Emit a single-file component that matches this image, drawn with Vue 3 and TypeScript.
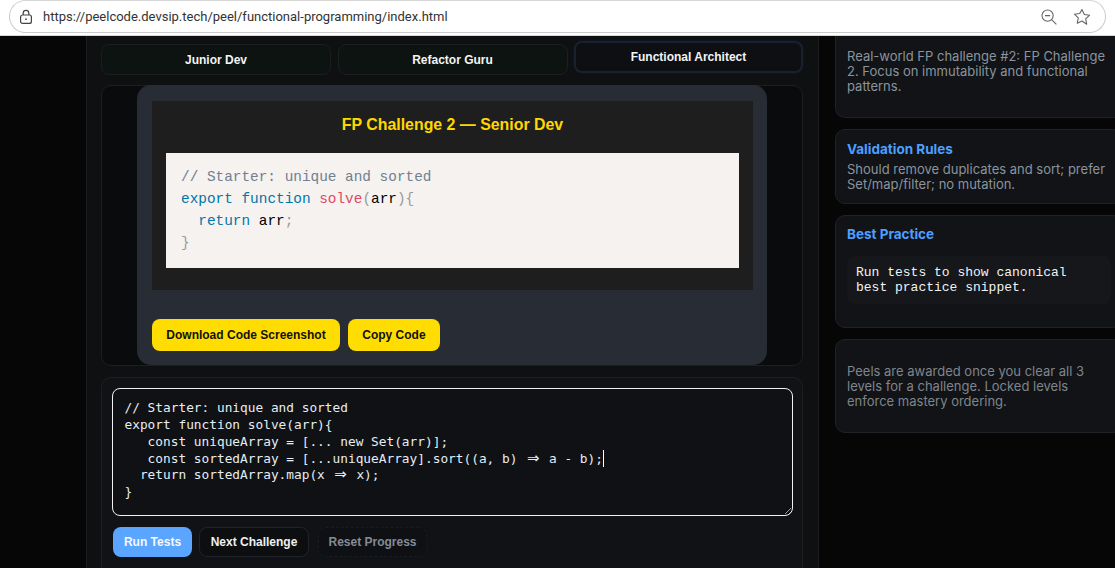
<script setup lang="ts">
const tabs = [
  { label: 'Junior Dev', active: false },
  { label: 'Refactor Guru', active: false },
  { label: 'Functional Architect', active: true },
]
</script>

<template>
  <div class="window">
    <header class="browser">
      <div class="address">
        <svg class="lock" width="16" height="16" viewBox="0 0 16 16" fill="none" stroke="#444" stroke-width="1.2">
          <rect x="2.6" y="6" width="10.8" height="8.4" rx="2" />
          <path d="M5.2 6V4.2a2.8 2.8 0 0 1 5.6 0V6" />
          <circle cx="8" cy="10.2" r=".9" fill="#444" stroke="none" />
        </svg>
        <span class="url">https://peelcode.devsip.tech/peel/functional-programming/index.html</span>
        <svg class="zoom-icon" width="18" height="18" viewBox="0 0 18 18" fill="none" stroke="#666" stroke-width="1.1">
          <circle cx="7.6" cy="7.6" r="5.6" />
          <path d="M11.8 11.8l4.6 4.6M5 7.6h5.2" />
        </svg>
        <svg class="star" width="18" height="18" viewBox="0 0 18 18" fill="none" stroke="#666" stroke-width="1.1" stroke-linejoin="round">
          <path d="M9 1.6l2.3 4.9 5.3.7-3.9 3.7 1 5.3L9 13l-4.7 2.2 1-5.3-3.9-3.7 5.3-.7z" />
        </svg>
      </div>
    </header>

    <div class="page">
      <main class="main">
        <nav class="tabs">
          <button v-for="t in tabs" :key="t.label" class="tab" :class="{ active: t.active }">{{ t.label }}</button>
        </nav>

        <section class="preview">
          <div class="shot">
            <div class="shot-inner">
              <h2 class="shot-title">FP Challenge 2 — Senior Dev</h2>
              <pre class="prism"><span class="c">// Starter: unique and sorted</span>
<span class="k">export</span> <span class="k">function</span> <span class="f">solve</span><span class="p">(</span>arr<span class="p">){</span>
  <span class="k">return</span> arr<span class="p">;</span>
<span class="p">}</span></pre>
            </div>
            <div class="shot-actions">
              <button class="yellow">Download Code Screenshot</button>
              <button class="yellow">Copy Code</button>
            </div>
          </div>
        </section>

        <section class="editor-card">
          <div class="editor">
            <div class="line">// Starter: unique and sorted</div>
            <div class="line">export function solve(arr){</div>
            <div class="line i3">const uniqueArray = [... new Set(arr)];</div>
            <div class="line i3">const sortedArray = [...uniqueArray].sort((a, b) <span class="lig">⇒</span> a - b);<span class="caret"></span></div>
            <div class="line i2">return sortedArray.map(x <span class="lig">⇒</span> x);</div>
            <div class="line">}</div>
          </div>
          <div class="controls">
            <button class="btn run">Run Tests</button>
            <button class="btn next">Next Challenge</button>
            <button class="btn reset">Reset Progress</button>
          </div>
        </section>
      </main>

      <aside class="side">
        <div class="card first">
          <p class="txt">Real-world FP challenge #2: FP Challenge 2. Focus on immutability and functional patterns.</p>
        </div>
        <div class="card rules">
          <h3 class="head">Validation Rules</h3>
          <p class="txt">Should remove duplicates and sort; prefer Set/map/filter; no mutation.</p>
        </div>
        <div class="card best">
          <h3 class="head">Best Practice</h3>
          <pre class="snippet">Run tests to show canonical
best practice snippet.</pre>
        </div>
        <div class="card note">
          <p class="txt dim">Peels are awarded once you clear all 3 levels for a challenge. Locked levels enforce mastery ordering.</p>
        </div>
      </aside>
    </div>
  </div>
</template>

<style>
html, body { margin: 0; background: #050505; overflow: hidden; }
</style>

<style scoped>
* { box-sizing: border-box; }
.window { width: 1115px; height: 568px; display: flex; flex-direction: column; overflow: hidden; background: #060606; }
.browser { height: 36px; flex: none; background: #fff; padding: 0 9px 2px; border-bottom: 1px solid #d8d8d8; }
.address { height: 33px; border: 1px solid #c9c9c9; border-top-color: #d6d6d6; border-radius: 17px; display: flex; align-items: center; padding: 0 14px 0 8px; background: #fff; }
.lock { flex: none; }
.url { margin-left: 9px; margin-top: -1px; flex: 1; font: 13px Roboto, "Liberation Sans", sans-serif; color: #333; white-space: nowrap; }
.zoom-icon { margin-right: 15px; flex: none; }
.star { flex: none; }

.page { flex: 1; min-height: 0; display: flex; padding-left: 86px; overflow: hidden; }
.main { width: 733px; flex: none; height: 100%; padding: 8px 15px 0 14px; border-left: 1px solid #1c1d20; border-right: 1px solid #1c1d20; background: #0e1012; display: flex; flex-direction: column; }

.tabs { display: grid; grid-template-columns: 230px 230px 229px; gap: 6.5px; height: 31px; flex: none; }
.tab { height: 31px; border: 1px solid #1a2020; border-radius: 8px; background: #0d1311; color: #f2f4f4; font: 700 12px "Liberation Sans", sans-serif; padding: 0; }
.tab.active { transform: translateY(-3px); background: #0d0f12; border: 2px solid #18212e; height: 32px; box-shadow: 0 0 0 1px #11151b; }

.preview { margin-top: 10px; height: 281px; flex: none; border: 1px solid #1c1f22; border-radius: 10px; background: #0a0b0c; display: flex; justify-content: center; }
.shot { width: 630px; height: 280px; margin-top: -1px; background: #282c35; border-radius: 14px; padding: 16px 14px 0 15px; display: flex; flex-direction: column; }
.shot-inner { height: 189px; background: #1e1e1e; padding: 0 14px; }
.shot-title { margin: 13px 0 0; height: 39px; text-align: center; color: #ffd700; font: 700 15.9px/22px "Liberation Sans", sans-serif; }
.prism { margin: 0; height: 115px; background: #f5f2f0; padding: 13px 15px; color: #000; font: 14.4px/22px "Liberation Mono", monospace; }
.c { color: #708090; }
.k { color: #0077aa; }
.f { color: #dd4a68; }
.p { color: #999; }
.shot-actions { display: flex; gap: 8px; margin-top: 29px; }
.yellow { height: 32px; padding: 0 14.3px; border: 0; border-radius: 8px; background: #ffdd00; color: #111; font: 700 12px "Liberation Sans", sans-serif; }

.editor-card { margin-top: 11px; flex: 1; min-height: 0; border: 1px solid #1c1f22; border-bottom: 0; border-radius: 10px 10px 0 0; background: #101215; padding: 10px 10px 0 10px; }
.editor { width: 681px; height: 128px; border: 1.5px solid #f2f2f2; border-radius: 8px; background: #0f1114; padding: 11px 11.5px; resize: both; overflow: hidden; color: #e6edf3; font: 12.8px/16.8px "DejaVu Sans Mono", monospace; }
.line { height: 16.8px; white-space: pre; }
.i2 { padding-left: 2ch; }
.i3 { padding-left: 3ch; }
.lig { padding: 0 1.8px; font-family: "DejaVu Sans", sans-serif; font-size: 15px; line-height: 0; }
.caret { display: inline-block; width: 1px; height: 17px; background: #fff; vertical-align: -4px; line-height: 0; }
.controls { display: flex; gap: 7px; margin-top: 11px; }
.btn { height: 30px; border-radius: 8px; font: 700 12px "Liberation Sans", sans-serif; padding: 0; }
.run { width: 79px; margin-left: 1px; border: 0; background: #5aa5ff; color: #f4f8ff; }
.next { width: 110px; border: 1px solid #20242a; background: #0c0e10; color: #eef0f2; }
.reset { width: 109px; margin-left: 2px; border: 1px dashed #181b1f; background: #0e1013; color: #868b94; }

.side { width: 288px; flex: none; margin-left: 16px; display: flex; flex-direction: column; gap: 11px; }
.card { border: 1px solid #1f2226; border-radius: 10px; background: #111316; padding: 0 11px; flex: none; }
.first { height: 82px; border-top: 0; border-radius: 0 0 10px 10px; padding-top: 13px; }
.rules { height: 75px; padding-top: 11px; }
.best { height: 113px; padding-top: 10px; }
.note { height: 94px; padding-top: 24px; }
.head { margin: 0; color: #4d9fff; font: 700 13.5px/16px Inter, sans-serif; }
.txt { margin: 0; color: #8b949e; font: 13px/15px Inter, sans-serif; }
.rules .txt { margin-top: 5px; }
.dim { color: #7f858d; }
.snippet { margin: 14px 0 0; height: 48px; padding: 9px 9px; width: 264px; background: #15171a; border-radius: 8px; color: #f0f3f6; font: 13px/15px "Liberation Mono", monospace; }
</style>
